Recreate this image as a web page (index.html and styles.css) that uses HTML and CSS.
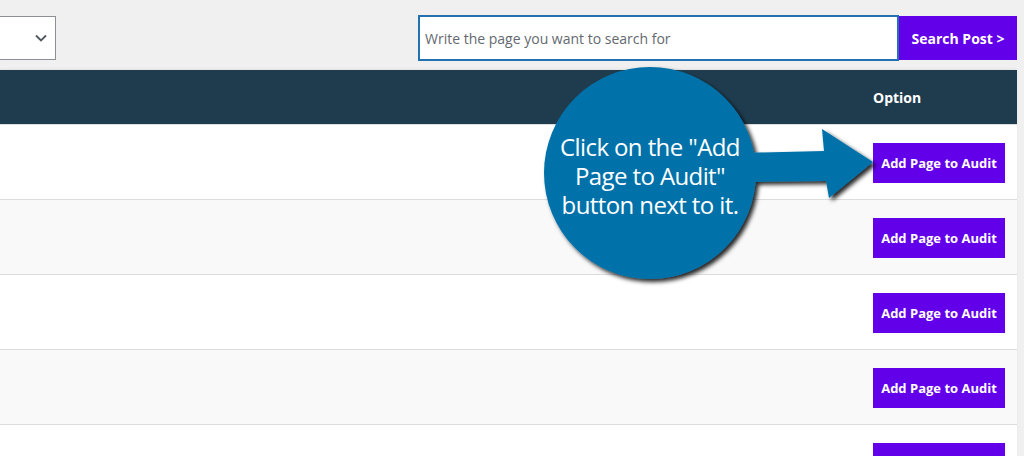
FILE: index.html
```html
<!DOCTYPE html>
<html>
<head>
    <title>Audit Pages</title>
    <link rel="stylesheet" href="styles.css">
</head>
<body>
    <div class="toolbar">
        <div class="select-box">
            <svg class="chevron" width="12" height="8" viewBox="0 0 12 8"><path d="M1 1.5 L6 6.5 L11 1.5" fill="none" stroke="#50575e" stroke-width="1.8"/></svg>
        </div>
        <form class="search" onsubmit="return false;">
            <input type="text" class="search-input" placeholder="Write the page you want to search for" autofocus>
            <button class="search-btn">Search Post &gt;</button>
        </form>
    </div>

    <div class="table-wrap">
        <table class="pages">
            <thead>
                <tr><th class="col-title"></th><th class="col-option">Option</th></tr>
            </thead>
            <tbody>
                <tr><td></td><td class="col-option"><button class="add-btn">Add Page to Audit</button></td></tr>
                <tr><td></td><td class="col-option"><button class="add-btn">Add Page to Audit</button></td></tr>
                <tr><td></td><td class="col-option"><button class="add-btn">Add Page to Audit</button></td></tr>
                <tr><td></td><td class="col-option"><button class="add-btn">Add Page to Audit</button></td></tr>
                <tr><td></td><td class="col-option"><button class="add-btn">Add Page to Audit</button></td></tr>
            </tbody>
        </table>

        <!-- annotation callout over the table -->
        <div class="callout">
            <svg width="360" height="240" viewBox="530 55 360 240">
                <defs>
                    <filter id="shade" x="-10%" y="-10%" width="130%" height="130%">
                        <feDropShadow dx="3" dy="3" stdDeviation="2" flood-color="#000" flood-opacity="0.85"/>
                    </filter>
                </defs>
                <g filter="url(#shade)" fill="#0072a9">
                    <polygon points="740,153 824,151 822,129 873,162 829,198 826,181 740,182"/>
                    <circle cx="650" cy="173" r="106"/>
                </g>
            </svg>
            <p class="callout-text">Click on the "Add<br>Page to Audit"<br>button next to it.</p>
        </div>
    </div>
</body>
</html>
```

FILE: styles.css
```css
body {
    margin: 0;
    background: #f0f0f0;
    font-family: "Open Sans", "Noto Sans", sans-serif;
    overflow: hidden;
}

.toolbar {
    display: flex;
    justify-content: space-between;
    align-items: center;
    height: 70px;
    padding: 15px 7px 9px 0;
    box-sizing: border-box;
}

.select-box {
    width: 56px;
    height: 44px;
    box-sizing: border-box;
    background: white;
    border: 1px solid #8c8f94;
    border-left: none;
    display: flex;
    align-items: center;
    justify-content: flex-end;
    padding-right: 8px;
}

.search {
    display: flex;
    align-items: center;
}

.search-input {
    width: 481px;
    height: 46px;
    box-sizing: border-box;
    border: 2px solid #2271b1;
    padding: 0 5px;
    font-family: "Open Sans", sans-serif;
    font-size: 14px;
    color: #2c3338;
    outline: none;
}

.search-input::placeholder {
    color: #646970;
}

.search-btn {
    width: 118px;
    height: 44px;
    border: none;
    background: #6200ea;
    color: white;
    font-family: "Open Sans", sans-serif;
    font-weight: 700;
    font-size: 14px;
    padding: 0;
}

.table-wrap {
    position: relative;
    margin-right: 7px;
}

.pages {
    width: 100%;
    border-collapse: collapse;
    background: white;
    box-shadow: 0 -1px 2px rgba(0,0,0,0.06);
}

.pages th {
    height: 54px;
    padding: 0;
    background: #1f3c4f;
    color: white;
    text-align: left;
    font-size: 14px;
    font-weight: 700;
    border-bottom: 1px solid #dcdcde;
}

.pages td {
    height: 74px;
    padding: 0;
    border-bottom: 1px solid #dcdcde;
}

.pages tbody tr:nth-child(even) td {
    background: #f9f9f9;
}

.col-option {
    width: 132px;
}

.pages .col-option {
    padding: 0 12px 0 10px;
}

.add-btn {
    display: block;
    width: 132px;
    height: 40px;
    border: none;
    background: #6200ea;
    color: white;
    font-family: "Open Sans", sans-serif;
    font-weight: 700;
    font-size: 13px;
    padding: 0;
    margin-top: 2px;
}

.callout {
    position: absolute;
    left: 530px;
    top: -15px;
    width: 360px;
    height: 240px;
}

.callout svg {
    display: block;
}

.callout-text {
    position: absolute;
    left: 0;
    top: 77px;
    width: 240px;
    margin: 0;
    text-align: center;
    white-space: nowrap;
    color: white;
    font-family: "Open Sans", sans-serif;
    font-size: 24px;
    line-height: 29px;
    letter-spacing: -0.6px;
}
```
